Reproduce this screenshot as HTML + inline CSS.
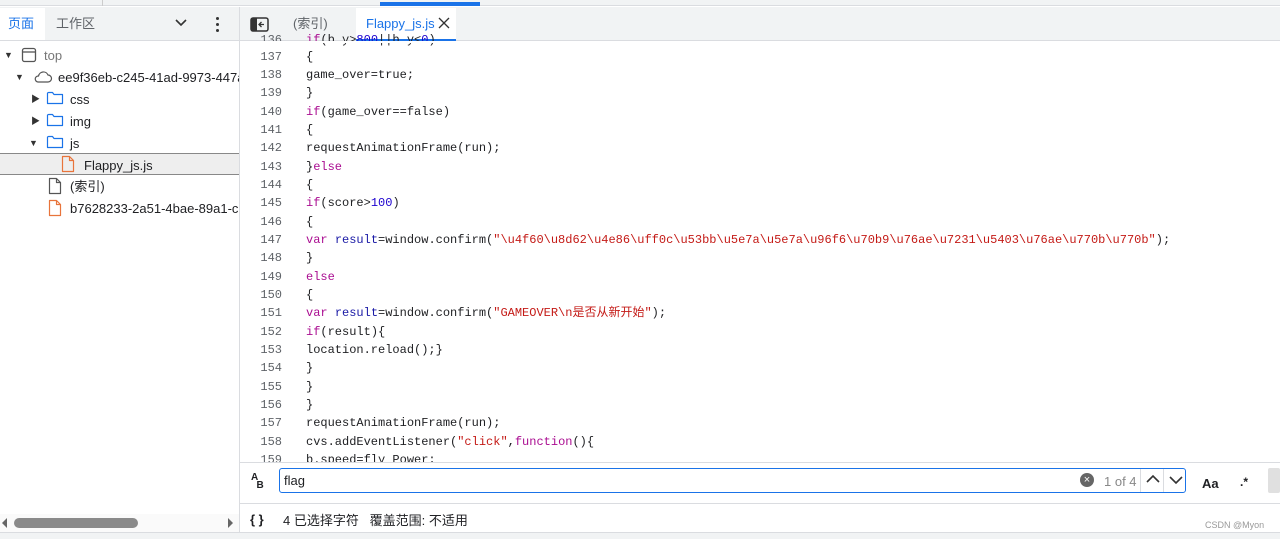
<!DOCTYPE html>
<html><head><meta charset="utf-8"><style>
*{margin:0;padding:0;box-sizing:border-box}
body{width:1280px;height:539px;overflow:hidden;background:#fff;font-family:"Liberation Sans","Noto Sans CJK SC",sans-serif;font-size:13px;line-height:15px;color:#202124;position:relative}
.abs{position:absolute}
.code{font-family:"Liberation Mono","Noto Sans CJK SC",monospace;font-size:12px;line-height:14px;white-space:pre}
.code div{height:14px;overflow:visible}
.ln{position:absolute;left:240px;width:42px;text-align:right;color:#5f6368}
.cl{position:absolute;left:306px;color:#202124}
.k{color:#aa0d91}.v{color:#1a1aa6}.s{color:#c41a16}.n{color:#1c00cf}
.tree div{position:absolute;white-space:nowrap}
.tri{font-size:9px;color:#333}
</style></head><body>
<div class="abs" style="left:0;top:0;width:1280px;height:6px;background:#f1f3f4;border-bottom:1px solid #dadce0"></div>
<div class="abs" style="left:102px;top:0;width:1px;height:6px;background:#ccc"></div>
<div class="abs" style="left:380px;top:2px;width:100px;height:4px;background:#1a73e8"></div>
<div class="abs" style="left:0;top:7px;width:240px;height:34px;background:#f1f3f4;border-bottom:1px solid #dadce0"></div>
<div class="abs" style="left:0;top:8px;width:45px;height:32px;background:#fff"></div>
<div class="abs" style="left:8px;top:16px;color:#1a73e8">页面</div>
<div class="abs" style="left:56px;top:16px;color:#5f6368">工作区</div>
<svg class="abs" style="left:174px;top:17px" width="14" height="12"><path d="M2 3l5 5 5-5" fill="none" stroke="#333" stroke-width="1.6"/></svg>
<div class="abs" style="left:216px;top:17px;width:3px;height:3px;background:#333;border-radius:50%;box-shadow:0 6px 0 #333,0 12px 0 #333"></div>
<div class="abs" style="left:239px;top:7px;width:1px;height:532px;background:#dadce0"></div>
<div class="tree">
<div class="tri" style="left:4px;top:48px">▼</div>
<svg class="abs" style="left:21px;top:47px" width="16" height="16"><rect x="1.5" y="1.5" width="13" height="13" rx="2" fill="none" stroke="#555" stroke-width="1.3"/><line x1="1.5" y1="5" x2="14.5" y2="5" stroke="#555" stroke-width="1.3"/></svg>
<div style="left:44px;top:48px;color:#777">top</div>
<div class="tri" style="left:15px;top:70px">▼</div>
<svg class="abs" style="left:33px;top:70px" width="20" height="14"><path d="M5 12h10a3.5 3.5 0 0 0 0-7 5 5 0 0 0-9.5 1A3 3 0 0 0 5 12z" fill="none" stroke="#555" stroke-width="1.2"/></svg>
<div style="left:58px;top:70px;width:181px;overflow:hidden">ee9f36eb-c245-41ad-9973-447a</div>
<div class="tri" style="left:31px;top:92px">▶</div>
<div class="tri" style="left:31px;top:114px">▶</div>
<div class="tri" style="left:29px;top:136px">▼</div>
<svg class="abs" style="left:46px;top:90px" width="18" height="16"><path d="M1.5 3v10.5h15V4.5H8L6.5 2.5h-4z" fill="none" stroke="#1a73e8" stroke-width="1.2" stroke-linejoin="round"/></svg>
<svg class="abs" style="left:46px;top:112px" width="18" height="16"><path d="M1.5 3v10.5h15V4.5H8L6.5 2.5h-4z" fill="none" stroke="#1a73e8" stroke-width="1.2" stroke-linejoin="round"/></svg>
<svg class="abs" style="left:46px;top:134px" width="18" height="16"><path d="M1.5 3v10.5h15V4.5H8L6.5 2.5h-4z" fill="none" stroke="#1a73e8" stroke-width="1.2" stroke-linejoin="round"/></svg>
<div style="left:70px;top:92px">css</div>
<div style="left:70px;top:114px">img</div>
<div style="left:70px;top:136px">js</div>
<div style="left:0;top:153px;width:239px;height:22px;background:#eeeeee;border-top:1px solid #888;border-bottom:1px solid #888"></div>
<svg class="abs" style="left:61px;top:155px" width="14" height="18"><path d="M1.5 1.5h7l4 4v11h-11z M8.5 1.5v4h4" fill="none" stroke="#e8743b" stroke-width="1.2" stroke-linejoin="round"/></svg>
<div style="left:84px;top:158px">Flappy_js.js</div>
<svg class="abs" style="left:48px;top:177px" width="14" height="18"><path d="M1.5 1.5h7l4 4v11h-11z M8.5 1.5v4h4" fill="none" stroke="#555" stroke-width="1.2" stroke-linejoin="round"/></svg>
<div style="left:70px;top:179px">(索引)</div>
<svg class="abs" style="left:48px;top:199px" width="14" height="18"><path d="M1.5 1.5h7l4 4v11h-11z M8.5 1.5v4h4" fill="none" stroke="#e8743b" stroke-width="1.2" stroke-linejoin="round"/></svg>
<div style="left:70px;top:201px;width:169px;overflow:hidden">b7628233-2a51-4bae-89a1-c</div>
</div>
<div class="abs" style="left:0;top:514px;width:239px;height:18px;background:#fafafa"></div>
<div class="abs" style="left:2px;top:518px;width:0;height:0;border-top:5px solid transparent;border-bottom:5px solid transparent;border-right:5px solid #666"></div>
<div class="abs" style="left:14px;top:518px;width:124px;height:10px;background:#8a8a8a;border-radius:5px"></div>
<div class="abs" style="left:228px;top:518px;width:0;height:0;border-top:5px solid transparent;border-bottom:5px solid transparent;border-left:5px solid #666"></div>
<div class="abs" style="left:0;top:532px;width:1280px;height:7px;background:#f1f3f4;border-top:1px solid #dadce0"></div>
<div class="abs" style="left:240px;top:7px;width:1040px;height:34px;background:#f1f3f4;border-bottom:1px solid #dadce0"></div>
<svg class="abs" style="left:250px;top:17px" width="20" height="15"><rect x="1" y="1" width="17" height="13" rx="2" fill="none" stroke="#333" stroke-width="1.5"/><rect x="1" y="1" width="6" height="13" fill="#333"/><path d="M14 7.5H9.5M11.5 5l-2.5 2.5 2.5 2.5" fill="none" stroke="#333" stroke-width="1.3"/></svg>
<div class="abs" style="left:293px;top:16px;color:#5f6368">(索引)</div>
<div class="abs" style="left:356px;top:8px;width:100px;height:33px;background:#fff;border-bottom:2px solid #1a73e8"></div>
<div class="abs" style="left:366px;top:16px;color:#1a73e8">Flappy_js.js</div>
<svg class="abs" style="left:438px;top:17px" width="12" height="12"><path d="M1 1l10 10M11 1L1 11" stroke="#333" stroke-width="1.3"/></svg>
<div class="code">
<div class="ln" style="top:33px">136</div><div class="cl" style="top:33px"><span class="k">if</span>(b.y&gt;<span class="n">800</span>||b.y&lt;<span class="n">0</span>)</div>
</div>
<div class="abs" style="left:240px;top:41px;width:1040px;height:2px;background:#fff"></div>
<div class="code">
<div class="ln" style="top:50px">137</div><div class="cl" style="top:50px">{</div>
<div class="ln" style="top:68px">138</div><div class="cl" style="top:68px">game_over=true;</div>
<div class="ln" style="top:86px">139</div><div class="cl" style="top:86px">}</div>
<div class="ln" style="top:105px">140</div><div class="cl" style="top:105px"><span class="k">if</span>(game_over==false)</div>
<div class="ln" style="top:123px">141</div><div class="cl" style="top:123px">{</div>
<div class="ln" style="top:141px">142</div><div class="cl" style="top:141px">requestAnimationFrame(run);</div>
<div class="ln" style="top:160px">143</div><div class="cl" style="top:160px">}<span class="k">else</span></div>
<div class="ln" style="top:178px">144</div><div class="cl" style="top:178px">{</div>
<div class="ln" style="top:196px">145</div><div class="cl" style="top:196px"><span class="k">if</span>(score&gt;<span class="n">100</span>)</div>
<div class="ln" style="top:215px">146</div><div class="cl" style="top:215px">{</div>
<div class="ln" style="top:233px">147</div><div class="cl" style="top:233px"><span class="k">var</span> <span class="v">result</span>=window.confirm(<span class="s">"\u4f60\u8d62\u4e86\uff0c\u53bb\u5e7a\u5e7a\u96f6\u70b9\u76ae\u7231\u5403\u76ae\u770b\u770b"</span>);</div>
<div class="ln" style="top:251px">148</div><div class="cl" style="top:251px">}</div>
<div class="ln" style="top:270px">149</div><div class="cl" style="top:270px"><span class="k">else</span></div>
<div class="ln" style="top:288px">150</div><div class="cl" style="top:288px">{</div>
<div class="ln" style="top:306px">151</div><div class="cl" style="top:306px"><span class="k">var</span> <span class="v">result</span>=window.confirm(<span class="s">"GAMEOVER\n是否从新开始"</span>);</div>
<div class="ln" style="top:325px">152</div><div class="cl" style="top:325px"><span class="k">if</span>(result){</div>
<div class="ln" style="top:343px">153</div><div class="cl" style="top:343px">location.reload();}</div>
<div class="ln" style="top:361px">154</div><div class="cl" style="top:361px">}</div>
<div class="ln" style="top:380px">155</div><div class="cl" style="top:380px">}</div>
<div class="ln" style="top:398px">156</div><div class="cl" style="top:398px">}</div>
<div class="ln" style="top:416px">157</div><div class="cl" style="top:416px">requestAnimationFrame(run);</div>
<div class="ln" style="top:435px">158</div><div class="cl" style="top:435px">cvs.addEventListener(<span class="s">"click"</span>,<span class="k">function</span>(){</div>
<div class="ln" style="top:453px">159</div><div class="cl" style="top:453px">b.speed=fly_Power;</div>
</div>
<div class="abs" style="left:240px;top:462px;width:1040px;height:40px;background:#fff;border-top:1px solid #dadce0"></div>
<div class="abs" style="left:251px;top:474px;font-size:10px;font-weight:bold;line-height:8px">A<br>&nbsp;&nbsp;B</div>
<div class="abs" style="left:279px;top:468px;width:907px;height:25px;border:1px solid #1a73e8;border-radius:3px"></div>
<div class="abs" style="left:284px;top:473px">flag</div>
<div class="abs" style="left:1080px;top:473px;width:14px;height:14px;border-radius:50%;background:#666;color:#fff;font-size:11px;line-height:14px;text-align:center">×</div>
<div class="abs" style="left:1104px;top:474px;color:#888">1 of 4</div>
<div class="abs" style="left:1140px;top:469px;width:1px;height:23px;background:#dadce0"></div>
<div class="abs" style="left:1163px;top:469px;width:1px;height:23px;background:#dadce0"></div>
<svg class="abs" style="left:1145px;top:473px" width="16" height="12"><path d="M2 9l6-6 6 6" fill="none" stroke="#333" stroke-width="1.6"/></svg>
<svg class="abs" style="left:1168px;top:474px" width="16" height="12"><path d="M2 3l6 6 6-6" fill="none" stroke="#333" stroke-width="1.6"/></svg>
<div class="abs" style="left:1202px;top:476px;font-weight:bold;font-size:13px">Aa</div>
<div class="abs" style="left:1240px;top:475px;font-weight:bold;font-size:12px">.*</div>
<div class="abs" style="left:1268px;top:468px;width:12px;height:25px;background:#e0e0e0;border-radius:2px"></div>
<div class="abs" style="left:240px;top:503px;width:1040px;height:30px;border-top:1px solid #dadce0"></div>
<div class="abs" style="left:250px;top:512px;font-weight:bold">{ }</div>
<div class="abs" style="left:283px;top:513px">4 已选择字符 &nbsp; 覆盖范围: 不适用</div>
<div class="abs" style="left:1205px;top:520px;font-size:9px;line-height:10px;color:#999">CSDN @Myon</div>
</body></html>
